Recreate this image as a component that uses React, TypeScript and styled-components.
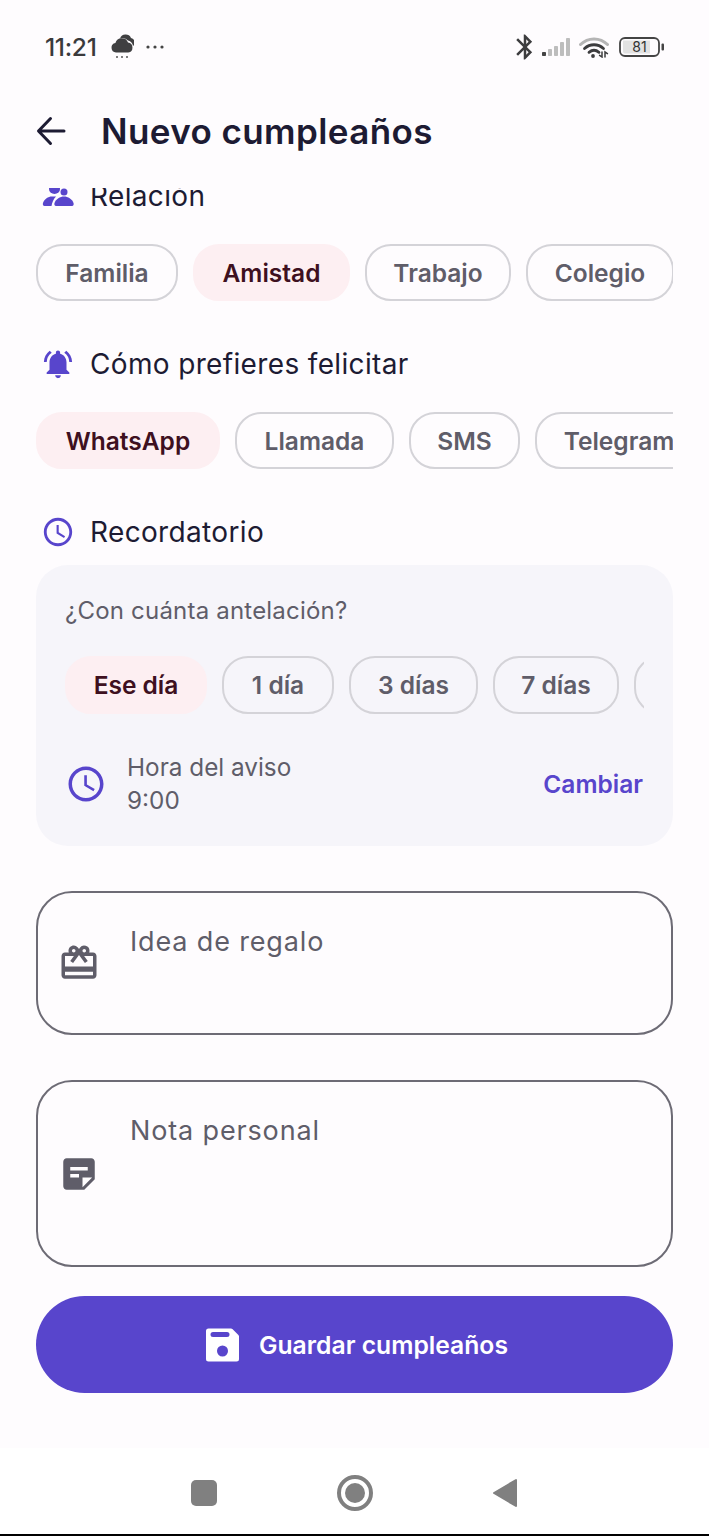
import styled, { createGlobalStyle } from "styled-components";
import {
  MdBluetooth,
  MdOutlineCardGiftcard,
  MdNotificationsActive,
  MdStickyNote2,
  MdOutlineSchedule,
} from "react-icons/md";

const COLORS = {
  page: "#fefcfe",
  ink: "#1d1b33",
  grey: "#5f5d69",
  line: "#d4d3d8",
  primary: "#5845cc",
  pick: "#fdeff2",
  pickInk: "#3e1020",
  card: "#f6f5fa",
};

const GlobalStyle = createGlobalStyle`
  html, body {
    margin: 0;
    padding: 0;
    background: ${COLORS.page};
  }
  * {
    box-sizing: border-box;
  }
`;

const Screen = styled.div`
  width: 709px;
  height: 1536px;
  display: flex;
  flex-direction: column;
  overflow: hidden;
  background: ${COLORS.page};
  font-family: Inter, "Noto Sans", "Liberation Sans", sans-serif;
  color: ${COLORS.ink};
`;

const StatusBar = styled.div`
  height: 76px;
  flex: none;
  padding: 18px 44px 0 45px;
  display: flex;
  align-items: flex-start;
  justify-content: space-between;
`;

const StatusGroup = styled.div`
  height: 58px;
  display: flex;
  align-items: center;
`;

const Spacer = styled.span<{ $w: number }>`
  width: ${(p) => p.$w}px;
`;

const Clock = styled.span`
  font-size: 24.5px;
  font-weight: 500;
  color: #3a3a3c;
  margin-right: 14px;
  letter-spacing: -0.3px;
`;

const TopBar = styled.div`
  height: 112px;
  flex: none;
  display: flex;
  align-items: center;
  padding: 0 0 2px 32px;
  gap: 33px;
`;

const BackButton = styled.div`
  width: 36px;
  height: 36px;
  display: flex;
  color: ${COLORS.ink};
`;

const Title = styled.h1`
  margin: 0;
  font-size: 35px;
  font-weight: 600;
  letter-spacing: 0.4px;
  color: ${COLORS.ink};
`;

const Scroller = styled.div`
  flex: 1;
  min-height: 0;
  overflow: hidden;
`;

const Content = styled.div`
  margin-top: -10px;
  padding: 0 36px;
  display: flex;
  flex-direction: column;
`;

const SectionLabel = styled.div`
  height: 36px;
  display: flex;
  align-items: center;
  gap: 15px;
  padding-left: 5px;
  font-size: 28px;
  font-weight: 400;
  letter-spacing: 0.35px;
  color: ${COLORS.ink};
  svg {
    color: ${COLORS.primary};
    flex: none;
  }
`;

const ChipRow = styled.div<{ $inset?: boolean }>`
  display: flex;
  gap: 15px;
  overflow: hidden;
  margin: ${(p) => (p.$inset ? "31px 0 0" : "30px 0 45px")};
`;

const Chip = styled.div<{ $on?: boolean; $w: number; $h?: number }>`
  flex: none;
  width: ${(p) => p.$w}px;
  height: ${(p) => p.$h ?? 57}px;
  border-radius: 26px;
  display: flex;
  align-items: center;
  justify-content: center;
  white-space: nowrap;
  font-size: 24.5px;
  font-weight: 600;
  color: ${(p) => (p.$on ? COLORS.pickInk : COLORS.grey)};
  background: ${(p) => (p.$on ? COLORS.pick : "transparent")};
  border: 2px solid ${(p) => (p.$on ? COLORS.pick : COLORS.line)};
`;

const ReminderCard = styled.div`
  margin-top: 15px;
  height: 281px;
  border-radius: 32px;
  background: ${COLORS.card};
  padding: 32px 29px 0;
`;

const CardPrompt = styled.div`
  font-size: 24px;
  line-height: 28px;
  letter-spacing: 0.2px;
  color: ${COLORS.grey};
`;

const TimeRow = styled.div`
  margin-top: 37px;
  display: flex;
  align-items: center;
  svg {
    color: ${COLORS.primary};
    flex: none;
  }
`;

const TimeText = styled.div`
  flex: 1;
  margin-left: 20px;
  font-size: 24.3px;
  line-height: 33px;
  color: ${COLORS.grey};
`;

const ChangeLink = styled.div`
  font-size: 24.5px;
  font-weight: 600;
  color: ${COLORS.primary};
  margin-right: 1px;
`;

const Field = styled.div<{ $h: number; $gap: number }>`
  margin-top: ${(p) => p.$gap}px;
  height: ${(p) => p.$h}px;
  border: 2px solid #6d6b75;
  border-radius: 36px;
  display: flex;
  align-items: center;
  padding-left: 20px;
  color: ${COLORS.grey};
  svg {
    flex: none;
  }
`;

const FieldText = styled.div`
  align-self: flex-start;
  margin-top: 32px;
  margin-left: 30px;
  font-size: 27px;
  line-height: 34px;
  letter-spacing: 0.85px;
  color: ${COLORS.grey};
`;

const SaveButton = styled.div`
  margin-top: 29px;
  height: 97px;
  border-radius: 49px;
  background: ${COLORS.primary};
  display: flex;
  align-items: center;
  justify-content: center;
  gap: 18px;
  font-size: 24.7px;
  font-weight: 600;
  color: #fff;
`;

const NavBar = styled.div`
  height: 88px;
  flex: none;
  background: #fff;
  border-bottom: 2px solid #000;
  display: flex;
  align-items: center;
  padding: 3px 0 0 191px;
`;

const NavSquare = styled.div`
  width: 26px;
  height: 26px;
  border-radius: 5px;
  background: #808080;
`;

const NavHome = styled.div`
  width: 36px;
  height: 36px;
  margin-left: 120px;
  border-radius: 50%;
  border: 4px solid #808080;
  display: flex;
  align-items: center;
  justify-content: center;
  &::after {
    content: "";
    width: 20px;
    height: 20px;
    border-radius: 50%;
    background: #808080;
  }
`;

const NavBack = styled.svg`
  margin-left: 119px;
`;

const DotsSvg = styled.svg`
  margin-left: 11px;
`;

const BackArrow = () => (
  <svg width="36" height="36" viewBox="0 0 36 36" fill="none" stroke="currentColor" strokeWidth="3" strokeLinecap="round" strokeLinejoin="round">
    <path d="M7 18h25M18.5 5.5L6.5 18l12 12.5" />
  </svg>
);

const PeopleIcon = () => (
  <svg width="34" height="34" viewBox="0 0 34 34" fill="currentColor">
    <ellipse cx="13.5" cy="10" rx="5.5" ry="5" />
    <circle cx="23" cy="13" r="3.5" />
    <path d="M3.5 27C2 27 1.5 25.5 2 24c1.5-4 5-6.5 9-6.5h4c-2.500 2.500-4 6-4.500 9.500z" />
    <path d="M15 27c-1.500 0-2-1.500-1.500-3 1.500-4 5.500-6.500 9.500-6.500s8 2.500 9.500 6.500c.5 1.500 0 3-1.500 3z" />
  </svg>
);

const SaveIcon = () => (
  <svg width="40" height="40" viewBox="-1.5 0 40 40">
    <path
      fillRule="evenodd"
      fill="#fff"
      d="M6 3.500h22.500a2 2 0 0 1 1.400.6l6 6a2 2 0 0 1 .6 1.400v22.500a2.500 2.500 0 0 1-2.500 2.500H6a2.500 2.500 0 0 1-2.500-2.500V6A2.500 2.500 0 0 1 6 3.500zM10.500 7a2.500 2.500 0 0 0 0 5h14a2.500 2.500 0 0 0 0-5zM20 20.500a5.500 5.500 0 1 0 0 11 5.500 5.500 0 0 0 0-11z"
    />
  </svg>
);

const WeatherIcon = () => (
  <svg width="23" height="26" viewBox="0 0 23 26">
    <path d="M9 4.500a6 6 0 0 1 11-.6 4.700 4.700 0 0 1 2 8.200 6.500 6.500 0 0 0-5-5.500A7.500 7.500 0 0 0 9 4.500z" fill="#3f3f41" />
    <path d="M5 18.500a4.800 4.800 0 0 1-.6-9.500A6.600 6.600 0 0 1 17 8.600a5 5 0 0 1 .3 9.900z" fill="#3f3f41" />
    <circle cx="6" cy="23" r="1" fill="#555" />
    <circle cx="11" cy="23" r="1" fill="#555" />
    <circle cx="16" cy="23" r="1" fill="#555" />
  </svg>
);

const MoreDots = () => (
  <DotsSvg width="20" height="6" viewBox="0 0 20 6">
    <circle cx="3" cy="3" r="1.600" fill="#444" />
    <circle cx="10" cy="3" r="1.600" fill="#444" />
    <circle cx="17" cy="3" r="1.600" fill="#444" />
  </DotsSvg>
);

const SignalIcon = () => (
  <svg width="30" height="20" viewBox="0 0 30 20">
    <rect x="1" y="15" width="4" height="4" rx="0.8" fill="#444" />
    <rect x="7" y="12" width="4" height="7" rx="0.8" fill="#bdbdbd" />
    <rect x="13" y="9" width="4" height="10" rx="0.8" fill="#bdbdbd" />
    <rect x="19" y="5" width="4" height="14" rx="0.8" fill="#bdbdbd" />
    <rect x="25" y="1" width="4" height="18" rx="0.8" fill="#bdbdbd" />
  </svg>
);

const WifiIcon = () => (
  <svg width="30" height="22" viewBox="0 0 30 22" fill="none" strokeLinecap="round">
    <path d="M1.500 8.500C9 1 21 1 28.500 8.500" stroke="#b5b5b5" strokeWidth="3" />
    <path d="M5.500 12.500c5.500-5 13.500-5 19 0" stroke="#3c3c3e" strokeWidth="2.800" />
    <path d="M10 16.300c3-2.400 7-2.400 10 0" stroke="#3c3c3e" strokeWidth="2.800" />
    <circle cx="14" cy="20" r="1.900" fill="#3c3c3e" />
    <path d="M23 16v5l-2.400-1.600M26 21v-5l2.400 1.600" stroke="#3c3c3e" strokeWidth="1.500" />
  </svg>
);

const BatteryIcon = () => (
  <svg width="46" height="20" viewBox="0 0 46 20">
    <rect x="1" y="1" width="39" height="18" rx="5" fill="none" stroke="#444" strokeWidth="1.800" />
    <path d="M4 3.500h27v13H6a2 2 0 0 1-2-2z" fill="#e2e2e2" />
    <rect x="42.500" y="6.500" width="2.500" height="7" rx="1" fill="#444" />
    <text x="20.500" y="15.200" textAnchor="middle" fontSize="14" fontFamily="Inter, sans-serif" fill="#333">
      81
    </text>
  </svg>
);

const relationChips = [
  { label: "Familia", w: 142 },
  { label: "Amistad", w: 157, on: true },
  { label: "Trabajo", w: 146 },
  { label: "Colegio", w: 148 },
];

const contactChips = [
  { label: "WhatsApp", w: 184, on: true },
  { label: "Llamada", w: 159 },
  { label: "SMS", w: 111 },
  { label: "Telegram", w: 168 },
];

const reminderChips = [
  { label: "Ese día", w: 142, on: true },
  { label: "1 día", w: 112 },
  { label: "3 días", w: 129 },
  { label: "7 días", w: 126 },
  { label: "", w: 130 },
];

export default function App() {
  return (
    <Screen>
      <GlobalStyle />
      <StatusBar>
        <StatusGroup>
          <Clock>11:21</Clock>
          <WeatherIcon />
          <MoreDots />
        </StatusGroup>
        <StatusGroup>
          <MdBluetooth size={30} color="#3c3c3e" />
          <Spacer $w={1} />
          <SignalIcon />
          <Spacer $w={8} />
          <WifiIcon />
          <Spacer $w={10} />
          <BatteryIcon />
        </StatusGroup>
      </StatusBar>

      <TopBar>
        <BackButton>
          <BackArrow />
        </BackButton>
        <Title>Nuevo cumpleaños</Title>
      </TopBar>

      <Scroller>
        <Content>
          <SectionLabel>
            <PeopleIcon />
            Relación
          </SectionLabel>
          <ChipRow>
            {relationChips.map((c) => (
              <Chip key={c.label} $on={c.on} $w={c.w}>
                {c.label}
              </Chip>
            ))}
          </ChipRow>

          <SectionLabel>
            <MdNotificationsActive size={34} />
            Cómo prefieres felicitar
          </SectionLabel>
          <ChipRow>
            {contactChips.map((c) => (
              <Chip key={c.label} $on={c.on} $w={c.w}>
                {c.label}
              </Chip>
            ))}
          </ChipRow>

          <SectionLabel>
            <MdOutlineSchedule size={34} />
            Recordatorio
          </SectionLabel>
          <ReminderCard>
            <CardPrompt>¿Con cuánta antelación?</CardPrompt>
            <ChipRow $inset>
              {reminderChips.map((c) => (
                <Chip key={c.label} $on={c.on} $w={c.w} $h={58}>
                  {c.label}
                </Chip>
              ))}
            </ChipRow>
            <TimeRow>
              <MdOutlineSchedule size={42} />
              <TimeText>
                Hora del aviso
                <br />
                9:00
              </TimeText>
              <ChangeLink>Cambiar</ChangeLink>
            </TimeRow>
          </ReminderCard>

          <Field $h={144} $gap={45}>
            <MdOutlineCardGiftcard size={42} />
            <FieldText>Idea de regalo</FieldText>
          </Field>
          <Field $h={187} $gap={45}>
            <MdStickyNote2 size={42} />
            <FieldText>Nota personal</FieldText>
          </Field>

          <SaveButton>
            <SaveIcon />
            Guardar cumpleaños
          </SaveButton>
        </Content>
      </Scroller>

      <NavBar>
        <NavSquare />
        <NavHome />
        <NavBack width="26" height="30" viewBox="0 0 26 30">
          <path d="M24 2v26L2 15z" fill="#808080" stroke="#808080" strokeWidth="2" strokeLinejoin="round" />
        </NavBack>
      </NavBar>
    </Screen>
  );
}
